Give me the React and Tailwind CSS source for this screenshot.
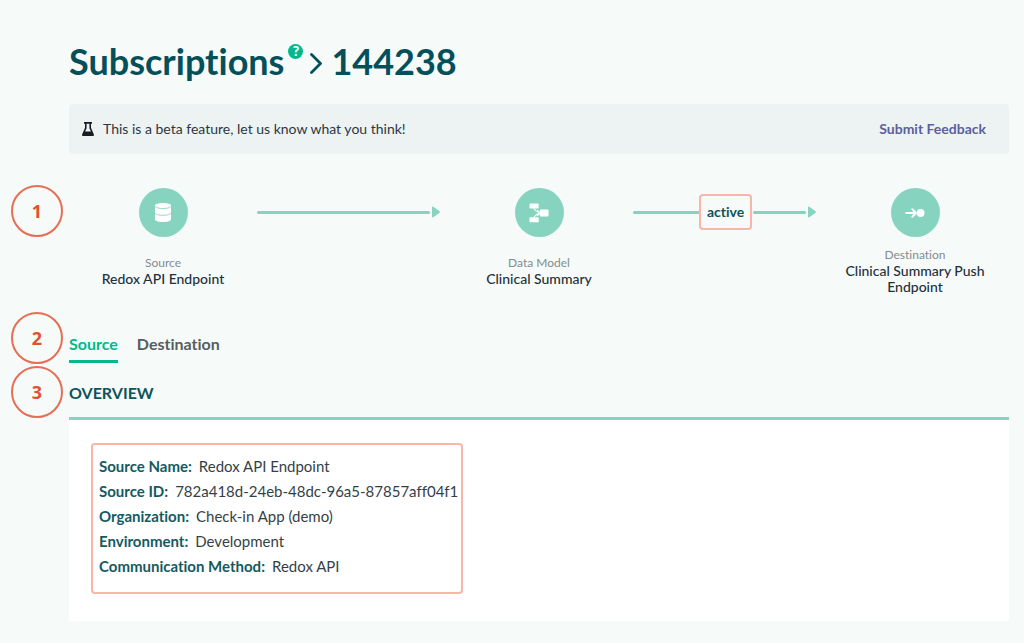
import React from "react";

const details = [
  ["Source Name:", "Redox API Endpoint"],
  ["Source ID:", "782a418d-24eb-48dc-96a5-87857aff04f1"],
  ["Organization:", "Check-in App (demo)"],
  ["Environment:", "Development"],
  ["Communication Method:", "Redox API"],
];

function Marker({ children }) {
  return (
    <div className="flex size-[52px] items-center justify-center rounded-full border-2 border-[#e66e54] font-['Open_Sans',sans-serif] text-lg font-bold text-[#e0512f]">
      {children}
    </div>
  );
}

function Step({ label, name, icon }) {
  return (
    <div className="flex flex-col items-center">
      <div className="flex size-[49px] items-center justify-center rounded-full bg-[#86d4c0]">{icon}</div>
      <div className="mt-2 flex min-h-[51px] flex-col justify-center text-center">
        <div className="text-xs leading-4 text-[#848b8d]">{label}</div>
        <div className="px-5 text-sm leading-4 font-medium text-[#23303a]">{name}</div>
      </div>
    </div>
  );
}

function Connector({ status }) {
  return (
    <div className="flex h-12 items-center pr-[5px]">
      {status && (
        <>
          <div className="h-[3px] flex-5 rounded-l-full bg-[#86d4c0]" />
          <div className="mr-px flex h-9 w-[53px] items-center justify-center rounded border-2 border-[#f8b6a9] text-sm font-bold text-[#0d545b]">
            {status}
          </div>
        </>
      )}
      <div className="h-[3px] flex-4 rounded-full bg-[#86d4c0]" />
      <svg viewBox="0 0 8 12" className="ml-0.5 h-3 w-2" fill="#86d4c0" aria-hidden="true">
        <path d="M0 1.2Q0 0 1 .6L7.5 5.3Q8.3 6 7.5 6.7L1 11.4Q0 12 0 10.8Z" />
      </svg>
    </div>
  );
}

const databaseIcon = (
  <svg viewBox="0 0 16 19" className="h-[19px] w-4" aria-hidden="true">
    <path fill="#fff" d="M0 2.6C0 1 3.5 0 8 0s8 1 8 2.6v13.600C16 18 12.500 19 8 19s-8-1-8-2.800z" />
    <path fill="none" stroke="#86d4c0" strokeWidth=".9" d="M0 3.200c.6 1.500 4 2.300 8 2.300s7.400-.8 8-2.300M0 10c.6 1.500 4 2.300 8 2.300s7.400-.8 8-2.300" />
  </svg>
);

const modelIcon = (
  <svg viewBox="0 0 20 20" className="size-5" aria-hidden="true">
    <g fill="#fff">
      <rect x=".5" y=".5" width="9.200" height="5" rx=".9" />
      <rect x=".5" y="14.300" width="9.200" height="5" rx=".9" />
      <rect x="10.800" y="6.600" width="8.800" height="6.800" rx=".9" />
    </g>
    <path fill="none" stroke="#fff" strokeWidth="1.100" d="M5.200 5.500C5.700 8 7.800 8.700 11 10 7.800 11.300 5.700 12 5.200 14.300M8.200 7.200 10.800 10 8.200 12.800" />
  </svg>
);

const destinationIcon = (
  <svg viewBox="0 0 20 10" className="h-2.5 w-5" aria-hidden="true">
    <path fill="none" stroke="#fff" strokeWidth="1.900" strokeLinecap="round" strokeLinejoin="round" d="M1.200 5h9.800M7.300 1.200 11 5 7.300 8.800" />
    <circle cx="15.600" cy="5" r="3.900" fill="#fff" />
  </svg>
);

export default function App() {
  return (
    <div className="min-h-screen bg-[#f6fbfa] pt-9 pr-[15px] pb-[22px] pl-[11px] font-[Lato,sans-serif] [font-variant-ligatures:none]">
      <main className="grid grid-cols-[52px_minmax(0,1fr)] gap-x-[6px]">
        <h1 className="col-start-2 flex h-[50px] items-center text-4xl font-bold text-[#04505a]">
          Subscriptions
          <button type="button" aria-label="Help" className="mb-5 ml-1 flex size-[15px] items-center justify-center rounded-full bg-[#04b78d] text-sm leading-none font-black text-white">
            ?
          </button>
          <svg viewBox="0 0 14 22" className="mt-1 mr-2 ml-1.5 h-[22px] w-3.5" fill="none" stroke="#04505a" strokeWidth="2.800" strokeLinecap="round" strokeLinejoin="round" aria-hidden="true">
            <path d="M2.500 2.500 11.500 11.500 2.500 20.500" />
          </svg>
          144238
        </h1>

        <div className="col-start-2 mt-[18px] flex h-[50px] items-center rounded bg-[#edf3f3] pr-[23px] pl-[13px] text-sm text-[#2c363f]">
          <svg viewBox="0 0 12 14" className="mr-[9px] h-3.5 w-3" aria-hidden="true">
            <path fill="#161d26" d="M2 0h8v1.800H9v4L11.900 12.400Q12.300 14 11 14H1Q-.3 14 .1 12.400L3 5.800v-4H2z" />
            <path fill="#edf3f3" d="M4.600 1.800h2.800v4.400l1.500 3.300H3.100l1.500-3.300z" />
          </svg>
          <p>This is a beta feature, let us know what you think!</p>
          <a href="#feedback" className="ml-auto font-bold text-[#5a5f9e]">Submit Feedback</a>
        </div>

        <div className="mt-[31px]">
          <Marker>1</Marker>
        </div>
        <section aria-label="Flow" className="mt-[34px] grid grid-cols-5">
          <Step label="Source" name="Redox API Endpoint" icon={databaseIcon} />
          <Connector />
          <Step label="Data Model" name="Clinical Summary" icon={modelIcon} />
          <Connector status="active" />
          <Step label="Destination" name="Clinical Summary Push Endpoint" icon={destinationIcon} />
        </section>

        <div className="mt-4">
          <Marker>2</Marker>
        </div>
        <div role="tablist" className="mt-4 flex h-[51px] items-end gap-[19px] text-base font-bold">
          <button type="button" role="tab" aria-selected="true" className="h-8 border-b-3 border-[#04b78d] pb-1 text-[#04b78d]">Source</button>
          <button type="button" role="tab" aria-selected="false" className="h-8 border-b-3 border-transparent pb-1 text-[#575d5e]">Destination</button>
        </div>

        <div className="mt-0.5">
          <Marker>3</Marker>
        </div>
        <section className="mt-0.5">
          <h2 className="flex h-[54px] items-center border-b-3 border-[#86d4c0] pt-0.5 text-base font-bold text-[#0d545b]">OVERVIEW</h2>
          <div className="bg-white px-[22px] pt-[23px] pb-[27px]">
            <dl className="w-[372px] rounded border-2 border-[#f8b6a9] px-1.5 pt-[9px] pb-[13px] text-[15px] leading-[25px]">
              {details.map(([term, value]) => (
                <div key={term} className="flex gap-[7px] whitespace-nowrap">
                  <dt className="font-bold text-[#145a61]">{term}</dt>
                  <dd className="text-[#353f48]">{value}</dd>
                </div>
              ))}
            </dl>
          </div>
        </section>
      </main>
    </div>
  );
}
